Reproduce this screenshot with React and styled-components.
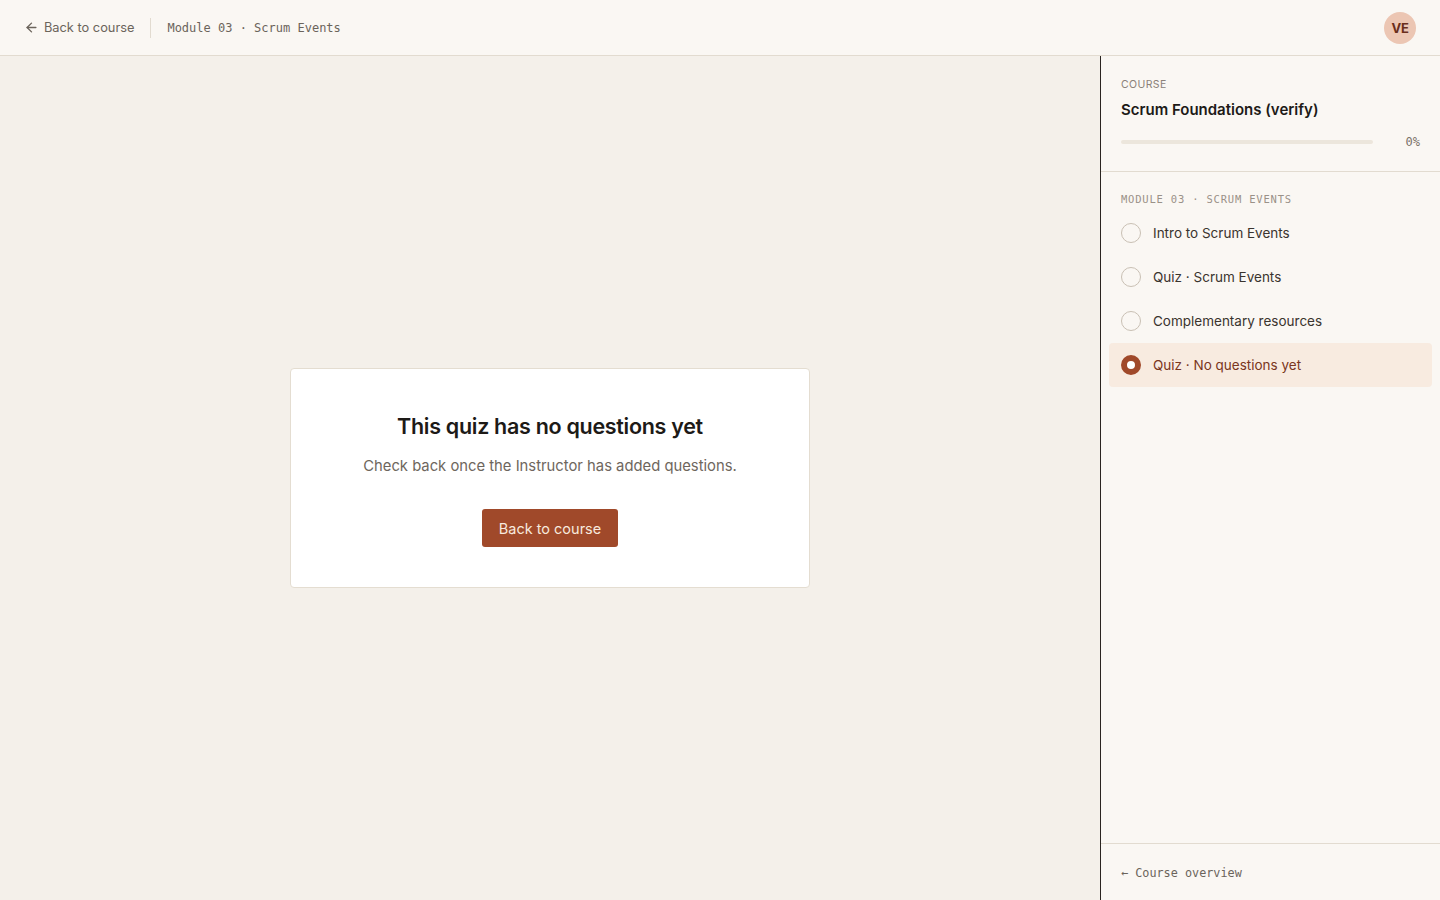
import React from 'react';
import styled, { createGlobalStyle } from 'styled-components';

const GlobalStyle = createGlobalStyle`
  html, body, #root { height: 100%; }
  body {
    margin: 0;
    font-family: Inter, "Noto Sans", sans-serif;
    background: #f4f0ea;
    color: #1f1b17;
  }
  * { box-sizing: border-box; }
`;

const MONO = `"DejaVu Sans Mono", "Liberation Mono", monospace`;

const Shell = styled.div`
  display: flex;
  flex-direction: column;
  height: 900px;
`;

const TopBar = styled.header`
  height: 56px;
  flex-shrink: 0;
  display: flex;
  align-items: center;
  padding: 0 24px;
  background: #faf7f3;
  border-bottom: 1px solid #e2dbd0;
`;

const BackLink = styled.a`
  display: flex;
  align-items: center;
  gap: 5px;
  font-size: 12.8px;
  color: #6b645b;
  text-decoration: none;
  cursor: pointer;
`;

const VDivider = styled.span`
  width: 1px;
  height: 20px;
  background: #e2dbd0;
  margin: 0 16px;
`;

const Crumb = styled.span`
  font-family: ${MONO};
  font-size: 12px;
  color: #6b645b;
`;

const Avatar = styled.div`
  margin-left: auto;
  width: 32px;
  height: 32px;
  border-radius: 50%;
  background: #ecc6b3;
  color: #6a2e1c;
  font-size: 13px;
  font-weight: 700;
  display: flex;
  align-items: center;
  justify-content: center;
  letter-spacing: -0.3px;
`;

const Body = styled.div`
  flex: 1;
  display: flex;
  min-height: 0;
`;

const Main = styled.main`
  flex: 1;
  display: flex;
  align-items: center;
  justify-content: center;
  background: #f4f0ea;
`;

const Card = styled.section`
  width: 520px;
  height: 220px;
  background: #ffffff;
  border: 1px solid #e4ddd1;
  border-radius: 4px;
  display: flex;
  flex-direction: column;
  align-items: center;
  padding-top: 42px;
`;

const Title = styled.h1`
  margin: 0;
  font-size: 21.5px;
  font-weight: 600;
  letter-spacing: -0.3px;
  line-height: 30px;
  color: #1d1a17;
`;

const Sub = styled.p`
  margin: 13px 0 0;
  font-size: 14.8px;
  line-height: 24px;
  color: #6e665d;
`;

const PrimaryButton = styled.button`
  margin-top: 31px;
  height: 38px;
  padding: 0 17px;
  border: none;
  border-radius: 3px;
  background: #a0492a;
  color: #f7e9de;
  font-family: inherit;
  font-size: 14.5px;
  cursor: pointer;
`;

const Sidebar = styled.aside`
  width: 340px;
  flex-shrink: 0;
  background: #faf7f3;
  border-left: 1px solid #2a2420;
  display: flex;
  flex-direction: column;
`;

const CourseBlock = styled.div`
  padding: 21px 20px 21px;
  border-bottom: 1px solid #e2dbd0;
`;

const Eyebrow = styled.div`
  font-size: 10.5px;
  line-height: 16px;
  letter-spacing: 0.4px;
  color: #8a8178;
`;

const CourseTitle = styled.div`
  margin-top: 7px;
  font-size: 15px;
  line-height: 20px;
  font-weight: 600;
  color: #1d1a17;
`;

const ProgressRow = styled.div`
  margin-top: 14px;
  display: flex;
  align-items: center;
  gap: 33px;
  height: 16px;
`;

const Track = styled.div`
  flex: 1;
  height: 4px;
  border-radius: 2px;
  background: #ece6dc;
`;

const Percent = styled.span`
  font-family: ${MONO};
  font-size: 12px;
  color: #7a7269;
`;

const ModuleBlock = styled.div`
  flex: 1;
  padding: 19px 8px 0;
`;

const ModuleLabel = styled.div`
  padding: 0 12px;
  font-family: ${MONO};
  font-size: 10.5px;
  line-height: 16px;
  letter-spacing: 0.8px;
  color: #9a9188;
  margin-bottom: 4px;
`;

const Lesson = styled.div`
  height: 44px;
  display: flex;
  align-items: center;
  gap: 12px;
  padding: 0 12px;
  border-radius: 4px;
  background: ${p => (p.$active ? '#f8ebe0' : 'transparent')};
  color: ${p => (p.$active ? '#7a3620' : '#3a342e')};
  font-size: 13.5px;
`;

const Dot = styled.span`
  width: 20px;
  height: 20px;
  border-radius: 50%;
  flex-shrink: 0;
  border: ${p => (p.$active ? '6px solid #a0492a' : '1.5px solid #c9c0b4')};
  background: ${p => (p.$active ? '#ffffff' : 'transparent')};
`;

const Footer = styled.div`
  height: 57px;
  border-top: 1px solid #e2dbd0;
  display: flex;
  align-items: center;
  padding: 1px 20px 0;
  font-family: ${MONO};
  font-size: 11.8px;
  color: #6b645b;
`;

const lessons = [
  { title: 'Intro to Scrum Events' },
  { title: 'Quiz · Scrum Events' },
  { title: 'Complementary resources' },
  { title: 'Quiz · No questions yet', active: true },
];

const ArrowLeft = () => (
  <svg width="15" height="15" viewBox="0 0 24 24" fill="none" stroke="currentColor"
    strokeWidth="2.2" strokeLinecap="round" strokeLinejoin="round">
    <path d="M19 12H5" />
    <path d="M12 19l-7-7 7-7" />
  </svg>
);

export default function App() {
  return (
    <Shell>
      <GlobalStyle />
      <TopBar>
        <BackLink>
          <ArrowLeft />
          Back to course
        </BackLink>
        <VDivider />
        <Crumb>Module 03 · Scrum Events</Crumb>
        <Avatar>VE</Avatar>
      </TopBar>
      <Body>
        <Main>
          <Card>
            <Title>This quiz has no questions yet</Title>
            <Sub>Check back once the Instructor has added questions.</Sub>
            <PrimaryButton>Back to course</PrimaryButton>
          </Card>
        </Main>
        <Sidebar>
          <CourseBlock>
            <Eyebrow>COURSE</Eyebrow>
            <CourseTitle>Scrum Foundations (verify)</CourseTitle>
            <ProgressRow>
              <Track />
              <Percent>0%</Percent>
            </ProgressRow>
          </CourseBlock>
          <ModuleBlock>
            <ModuleLabel>MODULE 03 · SCRUM EVENTS</ModuleLabel>
            {lessons.map(l => (
              <Lesson key={l.title} $active={l.active}>
                <Dot $active={l.active} />
                {l.title}
              </Lesson>
            ))}
          </ModuleBlock>
          <Footer>← Course overview</Footer>
        </Sidebar>
      </Body>
    </Shell>
  );
}
